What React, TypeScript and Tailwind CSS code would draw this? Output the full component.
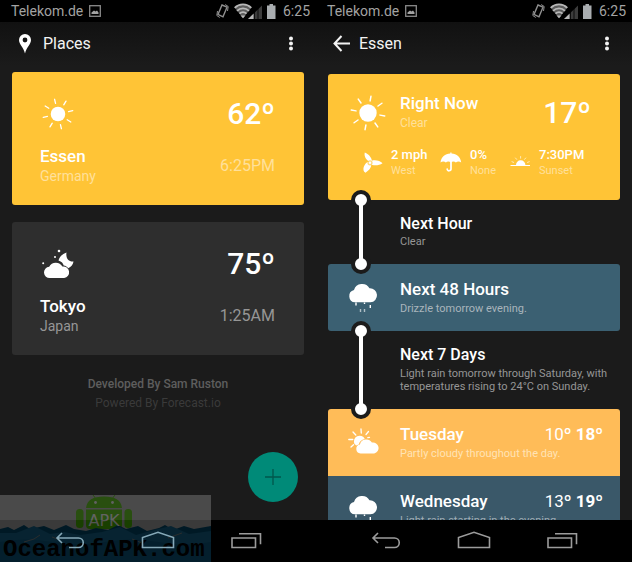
import type { ReactNode } from "react";

const rays = [0, 45, 90, 135, 180, 225, 270, 315];

function Sun({ size, tilt }: { size: "small" | "large"; tilt: number }) {
  return (
    <svg viewBox="-18 -18 36 36" className={size === "small" ? "h-8 w-8" : "h-9 w-9"} aria-hidden="true">
      <circle r={size === "small" ? 8.2 : 8.7} fill="#fff" />
      {rays.map((r) => (
        <line key={r} x1="0" y1="-12.2" x2="0" y2="-17" stroke="#fff" strokeWidth="1.5" strokeLinecap="round" transform={`rotate(${r + tilt})`} />
      ))}
    </svg>
  );
}

function CloudMoon() {
  return (
    <svg viewBox="0 0 36 36" className="h-9 w-9" aria-hidden="true" fill="#fff">
      <circle cx="19" cy="5" r="1.3" />
      <circle cx="15" cy="11" r="1" />
      <circle cx="3.2" cy="17.3" r="1" />
      <path d="M26.5 6.500c-4 1.400-7 4-8 8.100 3.200 1 4.600 2.800 5.200 5 2 .3 3.600 1.200 4.500 2.600 3-1.200 5-4 5.300-6.700-4.600.5-8-3-7-9z" />
      <path d="M10 32a5.600 5.600 0 0 1-.8-11.200 7.500 7.500 0 0 1 13.200-.3 5.800 5.800 0 0 1 1.800 11.500z" />
    </svg>
  );
}

function RainCloud() {
  return (
    <svg viewBox="0 0 36 36" className="h-9 w-9" aria-hidden="true" fill="#fff">
      <path d="M9 21.300A6.200 6.200 0 0 1 8 9.100a8.500 8.500 0 0 1 15.500-1.800 7 7 0 0 1 1 14z" />
      <path d="M10 21.500v3M18.500 21.500v1.500M24.300 24v3" stroke="#fff" strokeWidth="1.400" />
      <path d="M14.500 28v3M18.500 28v3" stroke="#fff" strokeOpacity=".6" strokeWidth="1.400" />
    </svg>
  );
}

function CloudSun() {
  return (
    <svg viewBox="-1 -1 36 36" className="h-9 w-9" aria-hidden="true" fill="#fff">
      <path d="M7.500 17a5.500 5.500 0 1 1 10.300-5c-3.600.7-5.400 2.600-6 5.400-1.200.3-1.700.6-2.500 1.200z" />
      <path d="M14 2l.3 4M21.500 4.500l-2.500 3M6 5l2.800 3M1.800 12.500h4M4 20l2.500-2.300M22.500 10.300l-1.700.4" stroke="#fff" strokeWidth="1.300" strokeLinecap="round" fill="none" />
      <path d="M13.500 26.500a4.500 4.500 0 0 1-.6-8.900 6.600 6.600 0 0 1 12-2 5.500 5.500 0 0 1 2.300 10.900z" />
    </svg>
  );
}

function Turbine() {
  return (
    <svg viewBox="0 0 26 26" className="h-6.5 w-6.5" aria-hidden="true" fill="#fff">
      <path d="M12.800 13C8 11.500 4.500 6.500 5.800 2.500 10 4 13.500 8.500 13 13z" />
      <path d="M10 12c4-3 10.500-2 13.500 1.200-3.500 2.600-9.500 2.800-13 .6z" />
      <path d="M9.500 11.500c4.500 1.500 3.500 7-3 11.200-4-2-1.700-9.200 3-11.200z" />
      <circle cx="11" cy="12.800" r="2.600" fill="#ffc436" fillOpacity=".65" />
      <circle cx="11" cy="12.800" r="1.200" />
    </svg>
  );
}

function Umbrella() {
  return (
    <svg viewBox="0 0 26 26" className="h-6.5 w-6.5" aria-hidden="true" fill="#fff">
      <path d="M2.500 12.500C3.200 7 7 3.800 12.300 3.500V2.500h1.200v1C18.800 3.800 22.500 7 23.200 12.500c-1.600-1.500-4-1.500-5.300 0-1.400-1.500-3.600-1.500-5 0-1.400-1.500-3.800-1.500-5 0-1.500-1.500-3.800-1.500-5.400 0z" />
      <path d="M13 11.500v7.300c0 2.600-3.800 2.600-3.800.2" fill="none" stroke="#fff" strokeWidth="1.700" strokeLinecap="round" />
    </svg>
  );
}

function Sunset() {
  return (
    <svg viewBox="0 0 26 26" className="h-6.5 w-6.5" aria-hidden="true" fill="#fff">
      <path d="M9 15a4.700 4.700 0 0 1 9.400 0z" />
      <path d="M3.500 15.500h19.500" stroke="#fff" strokeWidth="1" />
      <path d="M13.600 6.500v1.700M8.500 8l1.200 1.400M18.700 8l-1.200 1.400M5 11.700l1.700.7M22.200 11.700l-1.700.7" stroke="#fff" strokeOpacity=".8" strokeWidth="0.800" strokeLinecap="round" />
    </svg>
  );
}

function StatusBar() {
  return (
    <div className="flex h-[22px] shrink-0 items-center bg-black pr-1.5 pl-[11px] text-sm text-[#a3a3a3]">
      <span>Telekom.de</span>
      <svg viewBox="0 0 12 12" className="ml-1.5 h-3 w-3" aria-hidden="true">
        <rect x="0.700" y="0.700" width="10.600" height="10.600" fill="none" stroke="#8a8a8a" strokeWidth="1.300" />
        <path d="M2.500 9V7.500L5 5.500l1.500 1L8 5.500l1.500 2V9z" fill="#a3a3a3" />
      </svg>
      <svg viewBox="0 0 64 18" className="ml-auto h-[18px] w-16" aria-hidden="true">
        <g fill="none" stroke="#8f8f8f" strokeWidth="1.400" transform="translate(2 0)">
          <path d="M7 3l5 2.200-4 9.600-5-2.300z" />
          <path d="M2.500 9l-.7 4.500 3 2M12.500 9l.7-4.500-3-2" strokeWidth="1" />
        </g>
        <path d="M21.500 5.500a12 12 0 0 1 17 0L30 16z" fill="#5c5c5c" />
        <path d="M21.700 5.800a12 12 0 0 1 16.600 0M24 8.800a8.500 8.500 0 0 1 12 0M26.500 11.700a5 5 0 0 1 7 0" fill="none" stroke="#b8b8b8" strokeWidth="1.800" />
        <path d="M27.500 13.500l2.500 2.800 2.500-2.800z" fill="#b8b8b8" />
        <path d="M35 17L49 3.500V17z" fill="#3c3c3c" />
        <path d="M35 17l5.500-5.300V17z" fill="#b8b8b8" />
        <path d="M41.500 9v8M45 6v11" stroke="#000" strokeWidth="0.800" />
        <path d="M54 3.500h2.500V2h3.500v1.500h2.500V17H54z" fill="#a9adb0" />
      </svg>
      <span className="ml-1.5">6:25</span>
    </div>
  );
}

function AppBar({ title, icon }: { title: string; icon: ReactNode }) {
  return (
    <header className="flex h-11 shrink-0 items-center bg-linear-to-b from-[#111] to-[#1b1b1b] px-4 text-[#f3f3f3]">
      {icon}
      <h1 className="ml-[7px] text-base">{title}</h1>
      <button type="button" aria-label="More options" className="ml-auto">
        <svg viewBox="0 0 18 20" className="h-5 w-[18px]" fill="#f3f3f3" aria-hidden="true">
          <circle cx="9" cy="4.500" r="2" />
          <circle cx="9" cy="9.500" r="2" />
          <circle cx="9" cy="14.500" r="2" />
        </svg>
      </button>
    </header>
  );
}

function NavBar({ line }: { line: string }) {
  return (
    <nav className={`grid h-[42px] shrink-0 grid-cols-3 bg-black px-[26px] ${line}`}>
      <button type="button" aria-label="Back" className="z-10 flex items-center justify-center">
        <svg viewBox="0 0 32 20" className="h-5 w-8" fill="none" stroke="currentColor" strokeWidth="1.600" aria-hidden="true">
          <path d="M8 2L3 7l5 5M3 7h21.500a4.500 4.500 0 0 1 0 9.500H15" />
        </svg>
      </button>
      <button type="button" aria-label="Home" className="z-10 flex items-center justify-center">
        <svg viewBox="0 0 34 20" className="h-5 w-[34px]" fill="none" stroke="currentColor" strokeWidth="1.600" aria-hidden="true">
          <path d="M1.500 16.500V6.500L17 1.300l15.500 5.200v10z" />
        </svg>
      </button>
      <button type="button" aria-label="Recent apps" className="z-10 flex items-center justify-center text-[#9c9c9c]">
        <svg viewBox="0 0 32 20" className="h-5 w-8" fill="none" stroke="currentColor" strokeWidth="1.600" aria-hidden="true">
          <path d="M2 7h23.500v9.500H2zM9 2.800h21.500v10.500" />
        </svg>
      </button>
    </nav>
  );
}

type PlaceProps = { city: string; country: string; temp: string; time: string; tone: string; muted: string; icon: ReactNode };

function PlaceCard({ city, country, temp, time, tone, muted, icon }: PlaceProps) {
  return (
    <article className={`rounded-[3px] pt-6 pr-[29px] pb-[19px] pl-7 ${tone}`}>
      <div className="flex h-9 items-center justify-between">
        <div className="flex w-9 justify-center">{icon}</div>
        <span className="text-[30px] leading-9 font-medium">{temp}</span>
      </div>
      <div className="mt-3.5 flex items-center justify-between">
        <div>
          <h2 className="text-[17px] leading-5 font-medium">{city}</h2>
          <p className={`text-sm leading-5 ${muted}`}>{country}</p>
        </div>
        <span className={`text-base ${muted}`}>{time}</span>
      </div>
    </article>
  );
}

function Watermark() {
  return (
    <div className="pointer-events-none absolute bottom-0 left-0 h-[67px] w-[211px] overflow-hidden opacity-40" aria-hidden="true">
      <svg viewBox="0 0 211 67" className="h-[67px] w-[211px]">
        <rect width="211" height="67" fill="#919191" />
        <g fill="#3f9d00">
          <path d="M86 13C87 5 93 1.500 104 1.500S121 5 122 13z" />
          <path d="M86 14.500h36V30q0 4-4 4H90q-4 0-4-4z" />
          <rect x="76" y="14" width="7.500" height="19" rx="3.500" />
          <rect x="124.500" y="14" width="7.500" height="19" rx="3.500" />
          <path d="M93 0l3 4M115 0l-3 4" stroke="#3f9d00" strokeWidth="1" />
        </g>
        <circle cx="95.500" cy="7.500" r="1.400" fill="#ccc" />
        <circle cx="112.500" cy="7.500" r="1.400" fill="#ccc" />
        <path d="M0 34l8-2 6 3 10-5 6 4 14-3 10 4 12-5 8 4 12 2 10-3 12 2 10-5 8 4 12-3 9 5 12-3 6-3 8 5 11-4 10 3 17-3v40H0z" fill="#00405e" />
        <path d="M0 38l16 0 18-7 16 8 14-2 16 3 22-3 18-5 16 8 18-5 17-4 18 8 22-3v33H0z" fill="#12587a" />
        <path d="M0 47q26-5 52 0t53 0 53 0 53 0v20H0z" fill="#0a4f70" />
        <path d="M24 47l10-3 6-4M52 42l8 3M132 44l10 4M168 43l14-5" stroke="#6a6f70" strokeWidth="1" fill="none" />
      </svg>
      <span className="absolute top-[18px] left-0 w-[208px] text-center font-['DejaVu_Sans',sans-serif] text-base leading-4 text-[#d0d0d0]">
        APK
      </span>
      <span className="absolute bottom-0 left-[3px] font-['Liberation_Mono',monospace] text-2xl leading-6 font-bold text-black">
        OceanofAPK.com
      </span>
    </div>
  );
}

function PlacesScreen() {
  return (
    <section className="relative flex h-screen min-w-0 flex-col">
      <StatusBar />
      <AppBar
        title="Places"
        icon={
          <svg viewBox="0 0 20 20" className="h-5 w-5" aria-hidden="true">
            <path fillRule="evenodd" d="M9 0a6 6 0 0 1 6 6c0 4.500-4.500 7-6 13.500C7.500 13 3 10.500 3 6a6 6 0 0 1 6-6zm0 3.600a2.400 2.400 0 1 0 0 4.800 2.400 2.400 0 0 0 0-4.800z" fill="#fff" />
          </svg>
        }
      />
      <main className="relative min-h-0 flex-1 overflow-hidden px-3 pt-1.5">
        <div className="flex flex-col gap-[17px]">
          <PlaceCard city="Essen" country="Germany" temp="62º" time="6:25PM" tone="bg-[#ffc436] text-white" muted="text-[#ffe09a]" icon={<Sun size="small" tilt={-13} />} />
          <PlaceCard city="Tokyo" country="Japan" temp="75º" time="1:25AM" tone="bg-[#2e2e2e] text-white" muted="text-[#969696]" icon={<CloudMoon />} />
        </div>
        <footer className="mt-5 text-center text-xs leading-[19px]">
          <p className="font-medium text-[#5e5e5e]">Developed By Sam Ruston</p>
          <p className="text-[#3a3a3a]">Powered By Forecast.io</p>
        </footer>
        <button type="button" aria-label="Add place" className="absolute right-[18px] bottom-[18px] flex size-[50px] items-center justify-center rounded-full bg-[#008a78]">
          <svg viewBox="0 0 16 16" className="h-4 w-4" stroke="#00574c" strokeWidth="1.300" aria-hidden="true">
            <path d="M8 0v16M0 8h16" />
          </svg>
        </button>
      </main>
      <NavBar line="text-[#86a9b8]" />
      <Watermark />
    </section>
  );
}

function Connector() {
  return (
    <div className="absolute -inset-y-2.5 left-[23px] z-10 flex w-5 flex-col items-center justify-between" aria-hidden="true">
      <span className="size-5 rounded-full border-4 border-[#1b1b1b] bg-white" />
      <span className="z-10 -my-1.5 w-1 flex-1 bg-white" />
      <span className="size-5 rounded-full border-4 border-[#1b1b1b] bg-white" />
    </div>
  );
}

function Stat({ icon, value, label }: { icon: ReactNode; value: string; label: string }) {
  return (
    <div className="flex items-center gap-1.5">
      {icon}
      <div>
        <p className="text-[13px] leading-4 font-medium">{value}</p>
        <p className="text-[11px] leading-4 text-[#ffe09a]">{label}</p>
      </div>
    </div>
  );
}

type BandProps = { title: string; text: string; tone: string; muted: string; icon: ReactNode; low?: string; high?: string };

function Band({ title, text, tone, muted, icon, low, high }: BandProps) {
  return (
    <article className={`flex shrink-0 pt-[13px] pr-[17px] pb-3.5 pl-[18px] text-white ${tone}`}>
      <div className="mt-1 w-9">{icon}</div>
      <div className="ml-[18px] flex-1">
        <div className="flex justify-between">
          <h2 className="text-[17px] leading-6 font-medium">{title}</h2>
          {high && (
            <span className="text-[17px] leading-6">
              {low} <b>{high}</b>
            </span>
          )}
        </div>
        <p className={`text-[11px] leading-4 ${muted}`}>{text}</p>
      </div>
    </article>
  );
}

function ForecastScreen() {
  return (
    <section className="flex h-screen min-w-0 flex-col">
      <StatusBar />
      <AppBar
        title="Essen"
        icon={
          <button type="button" aria-label="Navigate up">
            <svg viewBox="0 0 20 20" className="h-5 w-5" fill="none" stroke="#f3f3f3" strokeWidth="2" aria-hidden="true">
              <path d="M9.500 2L2.500 9.500l7 7.500M2.500 9.500H18" />
            </svg>
          </button>
        }
      />
      <main className="flex min-h-0 flex-1 flex-col overflow-hidden px-3 pt-2">
        <article className="shrink-0 rounded-[3px] bg-[#ffc436] pt-[19px] pb-[21px] text-white">
          <div className="flex items-center pr-[29px] pl-[22px]">
            <Sun size="large" tilt={10} />
            <div className="ml-3.5 flex-1">
              <h2 className="text-[17px] leading-5 font-medium">Right Now</h2>
              <p className="text-xs leading-5 text-[#ffe09a]">Clear</p>
            </div>
            <span className="text-[30px] leading-9 font-medium">17º</span>
          </div>
          <div className="mt-3.5 grid grid-cols-[79px_69px_1fr] pl-[31px]">
            <Stat icon={<Turbine />} value="2 mph" label="West" />
            <Stat icon={<Umbrella />} value="0%" label="None" />
            <Stat icon={<Sunset />} value="7:30PM" label="Sunset" />
          </div>
        </article>
        <div className="relative shrink-0 pt-3.5 pb-3.5 pl-[72px]">
          <Connector />
          <h2 className="text-base leading-5 font-medium text-white">Next Hour</h2>
          <p className="text-[11px] leading-4 text-[#969696]">Clear</p>
        </div>
        <Band title="Next 48 Hours" text="Drizzle tomorrow evening." tone="rounded-[3px] bg-[#3b6072]" muted="text-[#a9b5bc]" icon={<RainCloud />} />
        <div className="relative shrink-0 pt-3.5 pb-4 pl-[72px]">
          <Connector />
          <h2 className="text-base leading-5 font-medium text-white">Next 7 Days</h2>
          <p className="mt-0.5 text-[11px] leading-[13px] text-[#969696]">Light rain tomorrow through Saturday, with temperatures rising to 24°C on Sunday.</p>
        </div>
        <Band title="Tuesday" text="Partly cloudy throughout the day." tone="rounded-t-[3px] bg-[#ffbc58]" muted="text-[#ffe3b5]" icon={<CloudSun />} low="10º" high="18º" />
        <Band title="Wednesday" text="Light rain starting in the evening." tone="bg-[#3a5869]" muted="text-[#a0adb5]" icon={<RainCloud />} low="13º" high="19º" />
      </main>
      <NavBar line="text-[#9c9c9c]" />
    </section>
  );
}

export default function App() {
  return (
    <div className="grid grid-cols-2 bg-[#1b1b1b] font-[Roboto,sans-serif]">
      <PlacesScreen />
      <ForecastScreen />
    </div>
  );
}
